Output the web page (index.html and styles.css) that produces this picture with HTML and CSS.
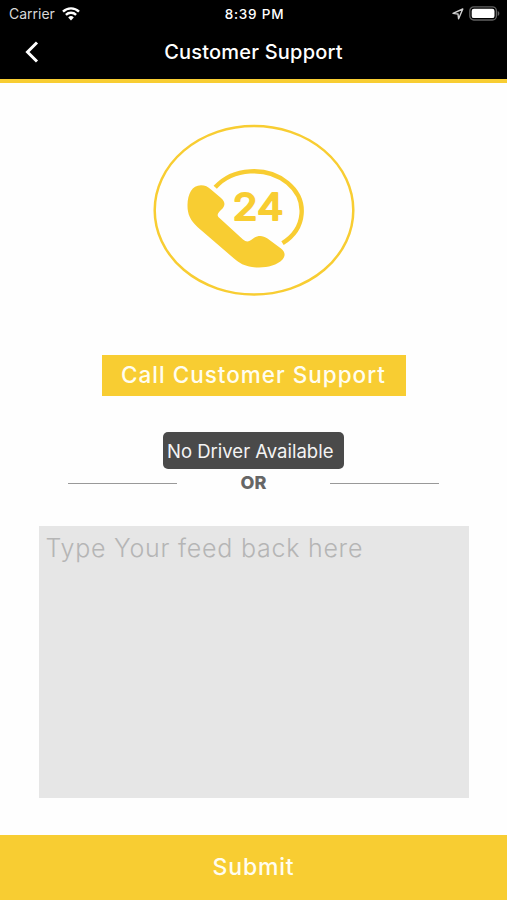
FILE: index.html
```html
<!DOCTYPE html>
<html lang="en">
  <head>
    <meta charset="UTF-8" />
    <meta name="viewport" content="width=device-width, initial-scale=1" />
    <title>Customer Support</title>
    <link rel="stylesheet" href="styles.css">
  </head>
  <body>
    <header class="header">
      <div class="status-bar">
        <div class="carrier">
          <span>Carrier</span>
          <svg class="wifi" viewBox="0 0 18 14" width="18" height="14">
            <path d="M1 4.700a11.400 11.400 0 0 1 16 0M3.900 7.800a7.200 7.200 0 0 1 10.200 0" fill="none" stroke="#fff" stroke-width="2.400" />
            <path d="M9 13.500l-2.800-3.100a4 4 0 0 1 5.600 0z" fill="#fff" />
          </svg>
        </div>
        <div class="time">8:39 PM</div>
        <div class="status-icons">
          <svg viewBox="0 0 12 12" width="12" height="12">
            <path d="M1 5.400L10.800 1 6.600 10.800 6 6z" fill="none" stroke="#d0d0d0" stroke-width="1.400" stroke-linejoin="round" />
          </svg>
          <svg viewBox="0 0 31 15" width="31" height="15">
            <rect x=".8" y=".8" width="26.600" height="13.200" rx="4" fill="none" stroke="#626262" stroke-width="1.300" />
            <rect x="2.700" y="2.700" width="22.800" height="9.400" rx="2.200" fill="#fff" />
            <path d="M28.700 5v5c2.200-1 2.200-4 0-5z" fill="#626262" />
          </svg>
        </div>
      </div>
      <div class="nav-bar">
        <svg class="back" viewBox="0 0 14 22" width="14" height="22">
          <path d="M12 1.500L2.500 11l9.500 9.500" fill="none" stroke="#fff" stroke-width="3" />
        </svg>
        <h1 class="title">Customer Support</h1>
      </div>
    </header>

    <main class="content">
      <svg class="support-icon" viewBox="152 124 204 172" width="204" height="172">
        <g fill="none" stroke="#f8cd32">
          <ellipse cx="254" cy="210.200" rx="99.300" ry="84.300" stroke-width="2.500" />
          <path d="M215.200 187.300A48 40 0 1 1 282.500 243.200" stroke-width="4.400" />
        </g>
        <path d="M201 185.300C205 185.300 208 186.800 211 189.500L221 198C225.500 202 225.500 205.500 221.500 209.500C218 213 216 215 219.500 218L243 239.500C246.500 242.500 249 241.800 252.500 239C257.500 235 262.500 235 267.500 238.500L281 248.500C285.500 252 285.500 256 282.500 259.500C276 266.500 263 268.500 252 267C244 265.800 240 263.500 234 258.500L198 227.500C190 220.500 187.300 213.500 187.500 205C187.700 194 192 185.300 201 185.300Z" fill="#f8cd32" />
        <text class="hours" x="232.500" y="220.200" textLength="51" lengthAdjust="spacingAndGlyphs">24</text>
      </svg>

      <button class="call-button">Call Customer Support</button>

      <div class="toast">No Driver Available</div>

      <div class="divider">
        <span class="line"></span>
        <span class="or">OR</span>
        <span class="line"></span>
      </div>

      <textarea class="feedback" placeholder="Type Your feed back here"></textarea>
    </main>

    <button class="submit-button">Submit</button>
  </body>
</html>
```

FILE: styles.css
```css
* {
  box-sizing: border-box;
}
body {
  margin: 0;
  height: 900px;
  display: flex;
  flex-direction: column;
  overflow: hidden;
  background-color: #fefefe;
  font-family: Inter, "Liberation Sans", sans-serif;
}
button {
  border: none;
  padding: 0 0 2px;
  background-color: #f8cd32;
  color: #fffdf0;
  font-family: inherit;
  font-weight: 500;
}
.header {
  height: 83px;
  background-color: #000;
  border-bottom: 4px solid #f8cd32;
  color: #fff;
}
.status-bar {
  display: grid;
  grid-template-columns: 1fr auto 1fr;
  align-items: center;
  height: 27px;
  padding: 0 7px 0 9px;
  font-size: 14px;
}
.carrier {
  display: flex;
  align-items: center;
  gap: 7px;
  color: #d8d8d8;
}
.time {
  font-size: 13.5px;
  font-weight: 500;
  letter-spacing: 0.8px;
}
.status-icons {
  display: flex;
  justify-content: flex-end;
  align-items: center;
  gap: 5px;
}
.nav-bar {
  display: grid;
  grid-template-columns: 1fr auto 1fr;
  align-items: center;
  height: 50px;
  padding: 0 25px;
}
.title {
  margin: 0;
  font-size: 20px;
  font-weight: 500;
  letter-spacing: 0.2px;
}
.content {
  flex: 1;
  display: flex;
  flex-direction: column;
  align-items: center;
  padding-top: 41px;
}
.support-icon {
  flex: none;
}
.hours {
  font-size: 37px;
  font-weight: 400;
  fill: #f8cd32;
  stroke: #f8cd32;
  stroke-width: 2;
  stroke-linejoin: round;
}
.call-button {
  width: 304px;
  height: 41px;
  margin-top: 59px;
  font-size: 22.5px;
  letter-spacing: 1px;
}
.toast {
  width: 181px;
  height: 37px;
  margin-top: 36px;
  padding-left: 4px;
  border-radius: 5px;
  background-color: #4a4a4a;
  color: #f4f4f4;
  font-size: 18.5px;
  line-height: 38px;
  white-space: nowrap;
}
.divider {
  display: flex;
  justify-content: space-between;
  align-items: center;
  width: 371px;
  height: 28px;
}
.line {
  width: 109px;
  height: 1px;
  background-color: #999;
}
.or {
  padding-bottom: 1px;
  color: #666;
  font-size: 18px;
  font-weight: 800;
}
.feedback {
  display: block;
  width: 430px;
  height: 272px;
  margin-top: 29px;
  padding: 7px 7px;
  border: none;
  resize: none;
  background-color: #e6e6e6;
  font-family: inherit;
  font-size: 25px;
  font-weight: 300;
  letter-spacing: 0.75px;
}
.feedback::placeholder {
  color: #b5b5b5;
}
.submit-button {
  height: 65px;
  font-size: 23px;
  letter-spacing: 0.8px;
}
```
